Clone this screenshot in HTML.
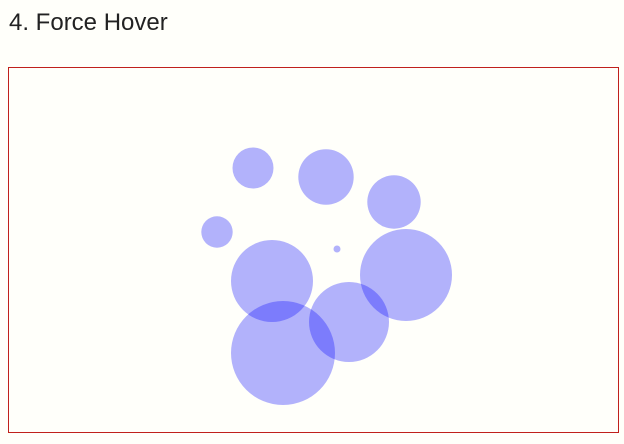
<!DOCTYPE html>
<html><head><meta charset="utf-8"><style>
html,body{margin:0;padding:0;background:#fffffa;width:624px;height:444px;overflow:hidden}
h1{position:absolute;left:9px;top:9px;margin:0;font:24px "Liberation Sans",sans-serif;color:#222}
svg{position:absolute;left:0;top:0}
</style></head><body>
<h1>4. Force Hover</h1>
<svg width="624" height="444">
<rect x="8.5" y="67.5" width="610" height="365" fill="none" stroke="#c0201c" stroke-width="1"/>
<g fill="#0000ff" fill-opacity="0.3">
<circle cx="253" cy="168" r="20.5"/>
<circle cx="326" cy="177" r="27.7"/>
<circle cx="394" cy="202" r="26.7"/>
<circle cx="217" cy="232" r="15.7"/>
<circle cx="337" cy="249" r="3.5"/>
<circle cx="272" cy="281" r="41"/>
<circle cx="406" cy="275" r="46"/>
<circle cx="349" cy="322" r="40"/>
<circle cx="283" cy="353" r="52"/>
</g>
</svg>
</body></html>
